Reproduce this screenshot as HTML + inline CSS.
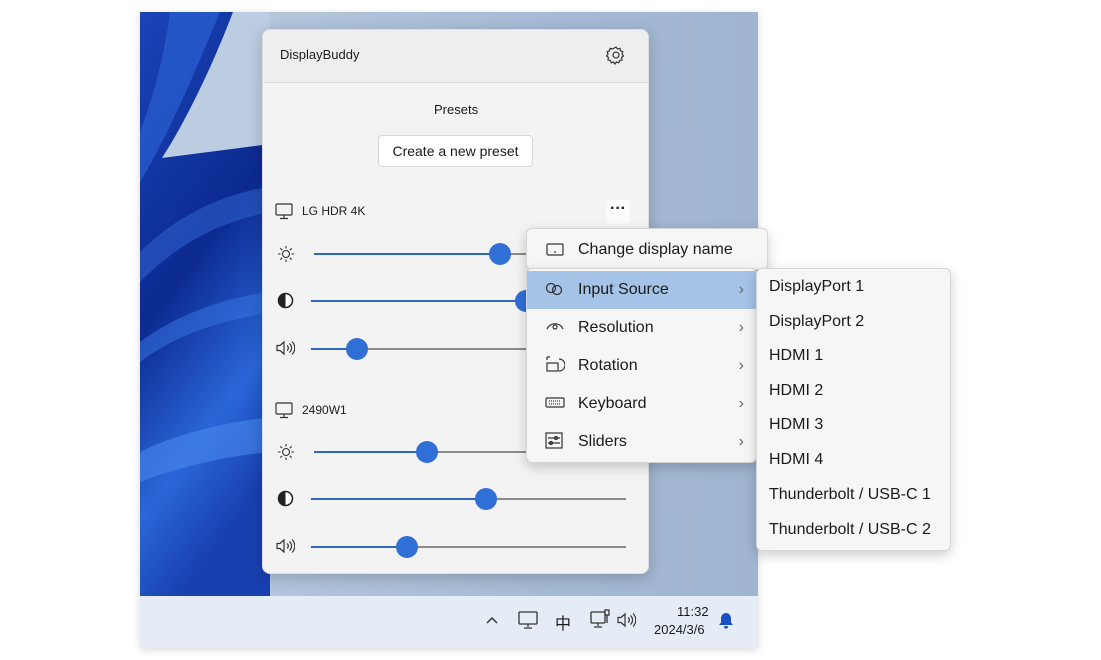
<!DOCTYPE html>
<html><head><meta charset="utf-8"><style>
*{margin:0;padding:0;box-sizing:border-box}
body{width:1101px;height:660px;background:#fff;position:relative;overflow:hidden;font-family:"Segoe UI","Liberation Sans","Noto Sans CJK SC",sans-serif;color:#1b1b1b}
.desk{position:absolute;left:140px;top:12px;width:618px;height:636px;background:linear-gradient(90deg,#b9cbe0 0%,#a8bcd6 60%,#9fb4d0 100%);overflow:hidden;box-shadow:0 2px 8px rgba(0,0,0,.15)}
.task{position:absolute;left:0;top:584px;width:618px;height:52px;background:#e6ecf5}
.panel{position:absolute;left:262px;top:29px;width:387px;height:545px;background:#f3f3f3;border-radius:8px;box-shadow:0 4px 16px rgba(0,0,0,.2);border:1px solid #ddd}
.hdr{height:53px;background:#eeeeee;border-bottom:1px solid #ddd;border-radius:8px 8px 0 0}
.t{position:absolute;font-size:13px}
.track{position:absolute;height:2px;background:#8a8a8a}
.fill{position:absolute;height:2px;background:#2f66c4}
.knob{position:absolute;width:22px;height:22px;border-radius:50%;background:#2f6fd6}
.menu{position:absolute;background:#f6f6f6;border:1px solid #d5d5d5;border-radius:6px;box-shadow:0 4px 12px rgba(0,0,0,.2)}
.mi{position:absolute;left:0;height:38px;font-size:16px;line-height:38px;padding-left:51px;width:100%}
.chev{position:absolute;right:12px;top:0;color:#666;font-size:16px}
.si{position:absolute;left:12px;font-size:16px}
svg{position:absolute}
</style></head><body>
<div class="desk">
<svg width="618" height="584" style="left:0;top:0">
<defs><linearGradient id="g" x1="0" y1="0" x2="0.3" y2="1"><stop offset="0" stop-color="#1a44b8"/><stop offset=".5" stop-color="#0c2a90"/><stop offset=".8" stop-color="#2a66d8"/><stop offset="1" stop-color="#1840b0"/></linearGradient></defs>
<rect x="0" y="0" width="130" height="584" fill="url(#g)"/>
<path d="M93 0 H130 V132 L22 146 C45 110 70 60 93 0Z" fill="#bccde2"/>
<path d="M30 0 H80 C55 60 30 120 0 170 V120 C15 80 25 40 30 0Z" fill="#2f66d8" opacity=".6"/>
<path d="M0 240 C40 200 90 180 130 175 V200 C80 210 40 230 0 270Z" fill="#3468d4" opacity=".5"/>
<path d="M0 330 C40 300 90 285 130 280 V300 C80 310 40 320 0 350Z" fill="#3a78e6" opacity=".5"/>
<path d="M0 440 C40 420 90 410 130 405 V440 C80 445 40 455 0 470Z" fill="#4a88ec" opacity=".6"/>
</svg>
<div class="task"></div>
</div>
<div class="panel"><div class="hdr"></div></div>
<div class="t" style="left:280px;top:47px">DisplayBuddy</div>
<svg style="left:606px;top:45px" width="20" height="20" viewBox="0 0 20 20" fill="none" stroke="#333" stroke-width="1.2"><circle cx="10" cy="10" r="3"/><path d="M10 2l1.5 2 2.4-.6.6 2.4 2.3.9-.8 2.3 1.5 2-2 1.5.6 2.4-2.4.6-.9 2.3-2.3-.8-1.5 2-1.5-2-2.3.8-.9-2.3-2.4-.6.6-2.4-2-1.5 1.5-2-.8-2.3 2.3-.9.6-2.4 2.4.6z"/></svg>
<div class="t" style="left:434px;top:102px">Presets</div>
<div style="position:absolute;left:378px;top:135px;width:155px;height:32px;background:#fff;border:1px solid #d6d6d6;border-radius:4px;font-size:14px;text-align:center;line-height:30px">Create a new preset</div>
<svg style="left:275px;top:203px" width="18" height="17" viewBox="0 0 18 17" fill="none" stroke="#333" stroke-width="1.2"><rect x="1" y="1" width="16" height="11" rx="1"/><path d="M9 12v3M5 15.5h8"/></svg>
<div class="t" style="left:302px;top:204px;font-size:12px">LG HDR 4K</div>
<div style="position:absolute;left:606px;top:200px;width:24px;height:24px;background:#fbfbfb;border-radius:4px;text-align:center;font-weight:bold;line-height:18px">···</div>
<svg style="left:275px;top:402px" width="18" height="17" viewBox="0 0 18 17" fill="none" stroke="#333" stroke-width="1.2"><rect x="1" y="1" width="16" height="11" rx="1"/><path d="M9 12v3M5 15.5h8"/></svg>
<div class="t" style="left:302px;top:403px;font-size:12px">2490W1</div>
<!-- icons -->
<svg style="left:277px;top:245px" width="18" height="18" viewBox="0 0 18 18" fill="none" stroke="#333" stroke-width="1.1"><circle cx="9" cy="9" r="3.5"/><path d="M9 1v2.5M9 14.5V17M1 9h2.5M14.5 9H17M3.3 3.3l1.8 1.8M12.9 12.9l1.8 1.8M3.3 14.7l1.8-1.8M12.9 5.1l1.8-1.8"/></svg>
<svg style="left:277px;top:443px" width="18" height="18" viewBox="0 0 18 18" fill="none" stroke="#333" stroke-width="1.1"><circle cx="9" cy="9" r="3.5"/><path d="M9 1v2.5M9 14.5V17M1 9h2.5M14.5 9H17M3.3 3.3l1.8 1.8M12.9 12.9l1.8 1.8M3.3 14.7l1.8-1.8M12.9 5.1l1.8-1.8"/></svg>
<svg style="left:277px;top:292px" width="17" height="17" viewBox="0 0 17 17"><circle cx="8.5" cy="8.5" r="7" fill="#fff" stroke="#222" stroke-width="1.5"/><path d="M8.5 1.5a7 7 0 0 0 0 14z" fill="#222"/></svg>
<svg style="left:277px;top:490px" width="17" height="17" viewBox="0 0 17 17"><circle cx="8.5" cy="8.5" r="7" fill="#fff" stroke="#222" stroke-width="1.5"/><path d="M8.5 1.5a7 7 0 0 0 0 14z" fill="#222"/></svg>
<svg style="left:276px;top:340px" width="19" height="16" viewBox="0 0 19 16" fill="none" stroke="#333" stroke-width="1.2"><path d="M1 5.5h3l4-3.5v12l-4-3.5H1z"/><path d="M11 5.5a3 3 0 0 1 0 5M13.5 3.5a6 6 0 0 1 0 9M16 1.5a9 9 0 0 1 0 13"/></svg>
<svg style="left:276px;top:538px" width="19" height="16" viewBox="0 0 19 16" fill="none" stroke="#333" stroke-width="1.2"><path d="M1 5.5h3l4-3.5v12l-4-3.5H1z"/><path d="M11 5.5a3 3 0 0 1 0 5M13.5 3.5a6 6 0 0 1 0 9M16 1.5a9 9 0 0 1 0 13"/></svg>
<!-- sliders -->
<div class="track" style="left:314px;top:253px;width:212px"></div><div class="fill" style="left:314px;top:253px;width:186px"></div><div class="knob" style="left:489px;top:243px"></div>
<div class="fill" style="left:311px;top:300px;width:215px"></div><div class="knob" style="left:515px;top:290px"></div>
<div class="track" style="left:311px;top:348px;width:215px"></div><div class="fill" style="left:311px;top:348px;width:46px"></div><div class="knob" style="left:346px;top:338px"></div>
<div class="track" style="left:314px;top:451px;width:212px"></div><div class="fill" style="left:314px;top:451px;width:113px"></div><div class="knob" style="left:416px;top:441px"></div>
<div class="track" style="left:311px;top:498px;width:315px"></div><div class="fill" style="left:311px;top:498px;width:175px"></div><div class="knob" style="left:475px;top:488px"></div>
<div class="track" style="left:311px;top:546px;width:315px"></div><div class="fill" style="left:311px;top:546px;width:96px"></div><div class="knob" style="left:396px;top:536px"></div>
<!-- menu -->
<div class="menu" style="left:526px;top:228px;width:242px;height:42px">
<div class="mi" style="top:2px">Change display name</div>
<svg style="left:19px;top:14px" width="18" height="13" fill="none" stroke="#333" stroke-width="1.2"><rect x="1" y="1" width="16" height="11" rx="1"/><path d="M8 9h2"/></svg>
</div>
<div class="menu" style="left:526px;top:268px;width:231px;height:195px">
<div class="mi" style="top:2px;background:#a5c3e6">Input Source<span class="chev">›</span></div>
<div class="mi" style="top:40px">Resolution<span class="chev">›</span></div>
<div class="mi" style="top:78px">Rotation<span class="chev">›</span></div>
<div class="mi" style="top:116px">Keyboard<span class="chev">›</span></div>
<div class="mi" style="top:154px">Sliders<span class="chev">›</span></div>
<svg style="left:18px;top:13px" width="20" height="14" fill="none" stroke="#333" stroke-width="1.3"><circle cx="6" cy="6" r="4.5"/><circle cx="12" cy="8" r="4.5"/></svg>
<svg style="left:19px;top:52px" width="18" height="10" fill="none" stroke="#333" stroke-width="1.2"><path d="M1 8C4 1 14 1 17 8"/><circle cx="9" cy="6" r="2"/></svg>
<svg style="left:18px;top:86px" width="20" height="20" fill="none" stroke="#333" stroke-width="1.2"><rect x="2" y="8" width="11" height="8"/><path d="M2 2v3M2 2h3M14 4a6 6 0 0 1 0 12"/></svg>
<svg style="left:18px;top:128px" width="20" height="12" fill="none" stroke="#333" stroke-width="1.2"><rect x="1" y="1" width="18" height="9" rx="1"/><path d="M4 4h12M4 7h12" stroke-dasharray="1 1"/></svg>
<svg style="left:18px;top:163px" width="18" height="17" fill="none" stroke="#333" stroke-width="1.2"><rect x="1" y="1" width="16" height="15"/><path d="M3 6h12M3 11h12"/><circle cx="11" cy="6" r="1.5"/><circle cx="6" cy="11" r="1.5"/></svg>
</div>
<div class="menu" style="left:756px;top:268px;width:195px;height:283px">
<div class="si" style="top:9px">DisplayPort 1</div>
<div class="si" style="top:44px">DisplayPort 2</div>
<div class="si" style="top:78px">HDMI 1</div>
<div class="si" style="top:113px">HDMI 2</div>
<div class="si" style="top:147px">HDMI 3</div>
<div class="si" style="top:182px">HDMI 4</div>
<div class="si" style="top:217px">Thunderbolt / USB-C 1</div>
<div class="si" style="top:252px">Thunderbolt / USB-C 2</div>
</div>
<!-- taskbar -->
<svg style="left:485px;top:615px" width="14" height="10" fill="none" stroke="#333" stroke-width="1.5"><path d="M2 8l5-5 5 5"/></svg>
<svg style="left:518px;top:611px" width="20" height="18" fill="none" stroke="#333" stroke-width="1.3"><rect x="1" y="1" width="18" height="12" rx="1"/><path d="M10 13v3M6 17h8"/></svg>
<div class="t" style="left:555px;top:610px;font-size:16px">中</div>
<svg style="left:590px;top:609px" width="22" height="20" fill="none" stroke="#333" stroke-width="1.3"><rect x="1" y="3" width="14" height="11" rx="1"/><path d="M8 14v3M4 18h8"/><rect x="15" y="1" width="4" height="5"/><path d="M17 6v8"/></svg>
<svg style="left:617px;top:612px" width="19" height="16" viewBox="0 0 19 16" fill="none" stroke="#333" stroke-width="1.2"><path d="M1 5.5h3l4-3.5v12l-4-3.5H1z"/><path d="M11 5.5a3 3 0 0 1 0 5M13.5 3.5a6 6 0 0 1 0 9M16 1.5a9 9 0 0 1 0 13"/></svg>
<div class="t" style="left:677px;top:604px;font-size:13px">11:32</div>
<div class="t" style="left:654px;top:622px;font-size:13px">2024/3/6</div>
<svg style="left:718px;top:612px" width="16" height="18" fill="#1d4fc4"><path d="M8 1c-3 0-5 2.5-5 5.5v4L1 13h14l-2-2.5v-4C13 3.5 11 1 8 1z"/><rect x="6" y="14" width="4" height="2.5" rx="1.2"/></svg>
</body></html>
